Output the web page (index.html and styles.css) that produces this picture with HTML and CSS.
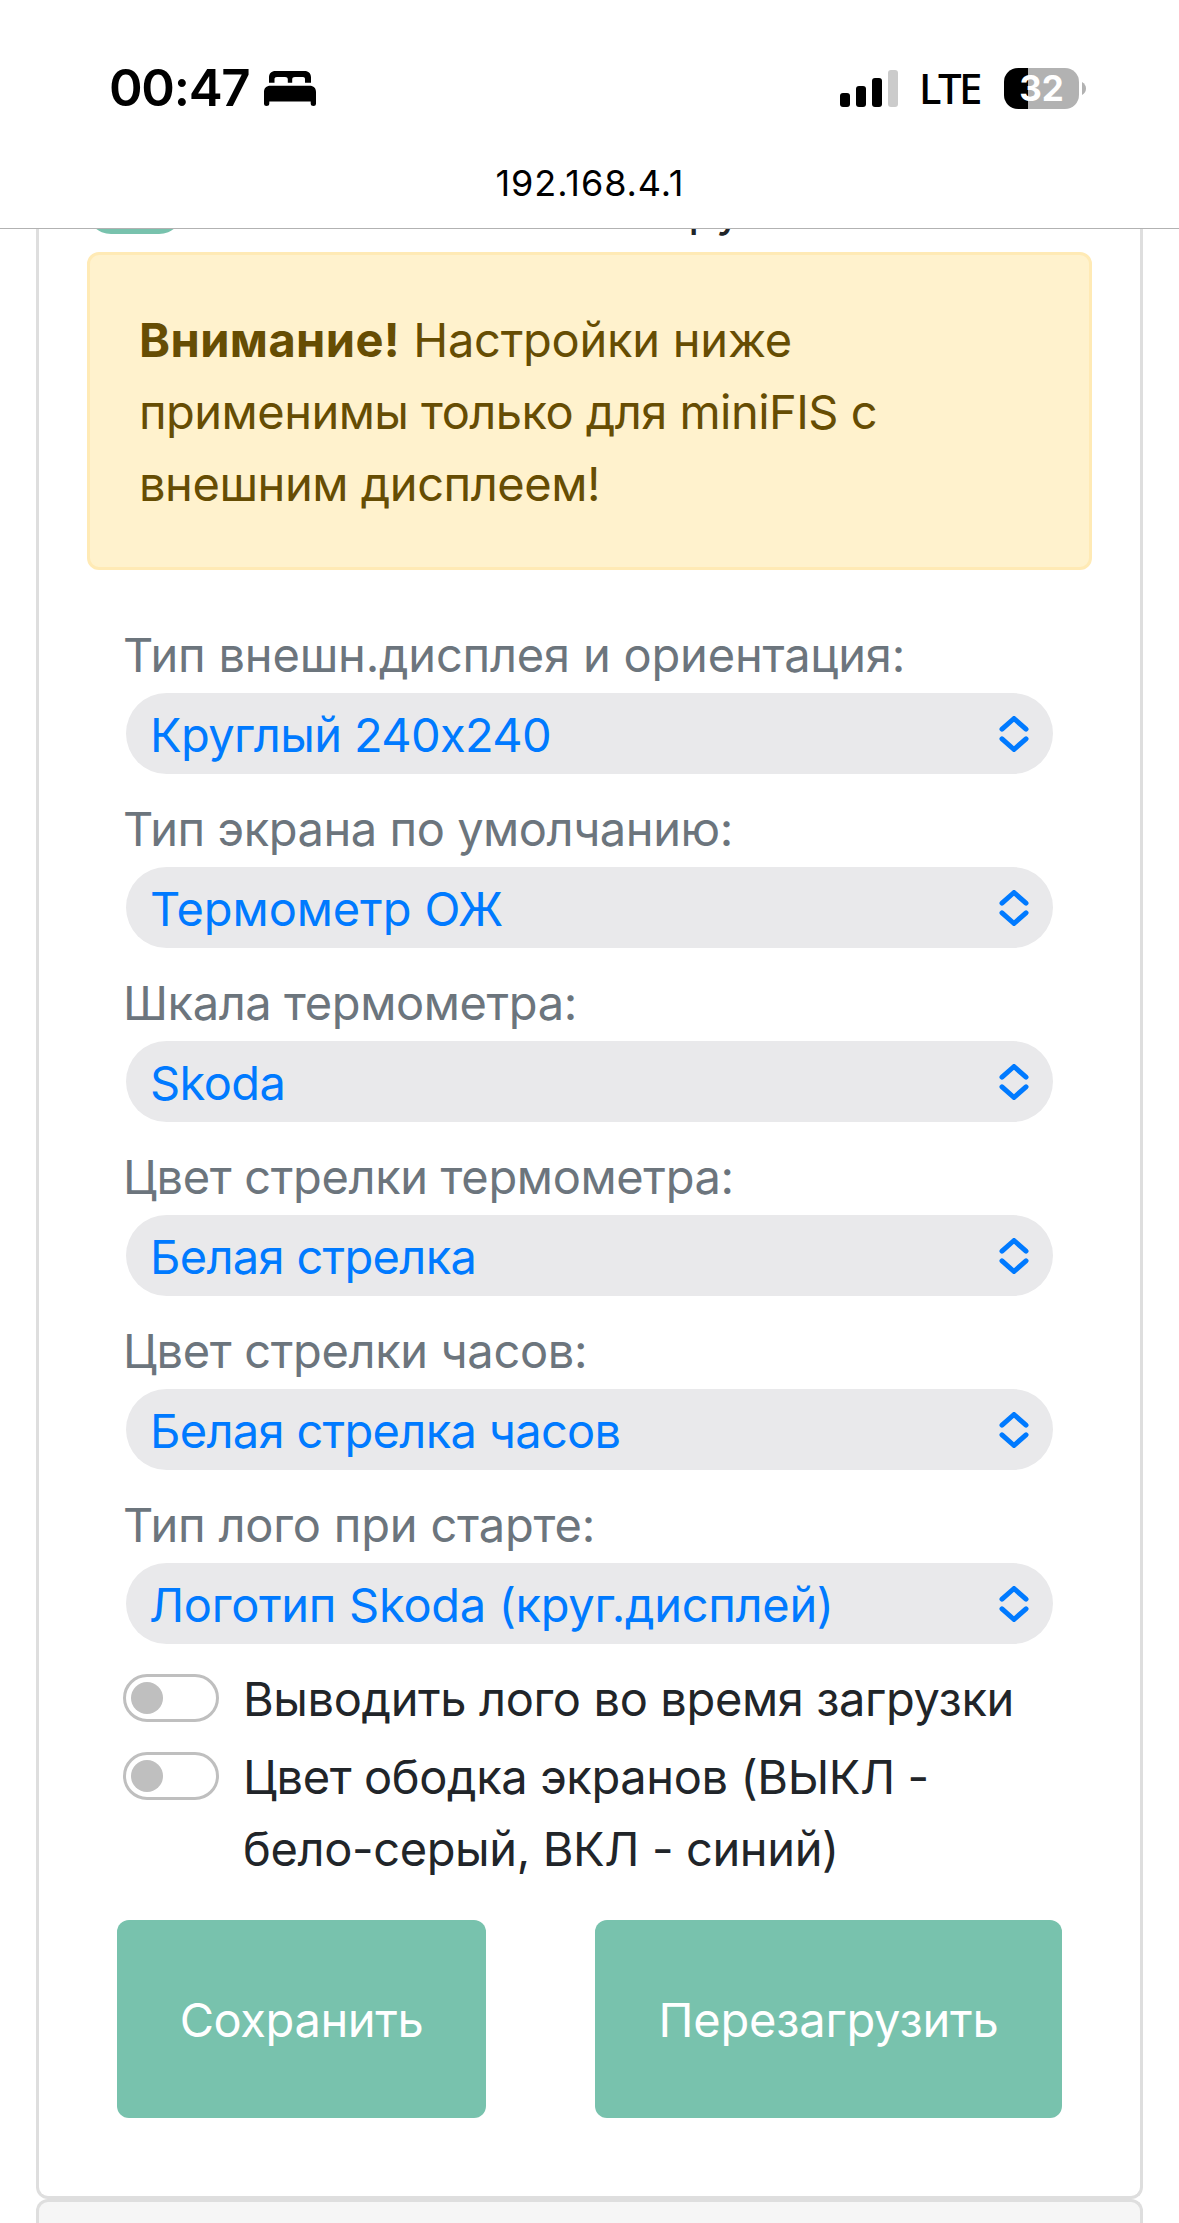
FILE: index.html
```
<!DOCTYPE html>
<html lang="ru">
<head>
<meta charset="utf-8">
<title>192.168.4.1</title>
<link rel="stylesheet" href="styles.css">
</head>
<body>
<svg class="defs" width="0" height="0">
  <symbol id="chevrons" viewBox="0 0 32 36"><path d="M4 13.2 16 2.500 28 13.200M4 22.800 16 33.500 28 22.800"/></symbol>
</svg>
<header class="browser">
  <div class="status">
    <div class="status-left">
      <span class="time">00:47</span>
      <svg class="bed" width="52" height="35" viewBox="0 0 52 35">
        <path d="M5 11.7V6.5C5 2.3 7.500 0 11.500 0H40.500C44.500 0 47 2.300 47 6.500V11.700H41V8C41 6.700 40.200 6 39 6H31C29.200 6 28.300 6.800 28.200 8.200V11.700H23.800V8.200C23.700 6.800 22.800 6 21 6H13C11.300 6 10.500 6.700 10.500 8V11.700Z"/>
        <path d="M0 21C0 17 2.300 14.700 6.500 14.700H45.500C49.700 14.700 52 17 52 21V32.500C52 34.200 51 35 49.500 35C47.800 35 46.700 34.200 46.700 32.500V30.500H5.300V32.500C5.300 34.200 4.200 35 2.500 35C1 35 0 34.200 0 32.500Z"/>
      </svg>
    </div>
    <div class="status-right">
      <svg class="signal" width="58" height="37" viewBox="0 0 58 37">
        <rect x="0" y="23" width="10" height="14" rx="3"/>
        <rect x="16" y="16" width="10" height="21" rx="3"/>
        <rect x="32" y="8" width="10" height="29" rx="3"/>
        <rect class="off" x="48" y="0" width="10" height="37" rx="3"/>
      </svg>
      <span class="lte">LTE</span>
      <div class="battery">32</div>
      <svg class="cap" width="4" height="13" viewBox="0 0 4 13"><path d="M0 0Q4 2.500 4 6.500T0 13Z"/></svg>
    </div>
  </div>
  <div class="address">192.168.4.1</div>
</header>
<main class="page">
  <section class="card">
    <div class="scrolled">
      <span class="switch-on"></span>
      <span class="scrolled-text">ру</span>
    </div>
    <div class="alert">
      <div><b class="warn">Внимание!</b> <span class="l1">Настройки ниже</span></div>
      <div class="l2">применимы только для miniFIS с</div>
      <div class="l3">внешним дисплеем!</div>
    </div>
    <div class="fields">
      <div class="field"><div class="label k1">Тип внешн.дисплея и ориентация:</div>
        <div class="select"><span class="v1">Круглый 240x240</span><svg class="arrows"><use href="#chevrons"/></svg></div></div>
      <div class="field"><div class="label k2">Тип экрана по умолчанию:</div>
        <div class="select"><span class="v2">Термометр ОЖ</span><svg class="arrows"><use href="#chevrons"/></svg></div></div>
      <div class="field"><div class="label k3">Шкала термометра:</div>
        <div class="select"><span class="v3">Skoda</span><svg class="arrows"><use href="#chevrons"/></svg></div></div>
      <div class="field"><div class="label k4">Цвет стрелки термометра:</div>
        <div class="select"><span class="v4">Белая стрелка</span><svg class="arrows"><use href="#chevrons"/></svg></div></div>
      <div class="field"><div class="label k5">Цвет стрелки часов:</div>
        <div class="select"><span class="v5">Белая стрелка часов</span><svg class="arrows"><use href="#chevrons"/></svg></div></div>
      <div class="field"><div class="label k1">Тип лого при старте:</div>
        <div class="select"><span class="v6">Логотип Skoda (круг.дисплей)</span><svg class="arrows"><use href="#chevrons"/></svg></div></div>
    </div>
    <div class="checks">
      <div class="check"><span class="switch"></span><div>Выводить лого во время загрузки</div></div>
      <div class="check"><span class="switch"></span><div>Цвет ободка экранов (ВЫКЛ -<br>бело-серый, ВКЛ - синий)</div></div>
    </div>
    <div class="buttons">
      <div class="btn save">Сохранить</div>
      <div class="btn reboot">Перезагрузить</div>
    </div>
  </section>
  <section class="card next"></section>
</main>
</body>
</html>
```
FILE: styles.css
```
* { box-sizing: border-box; }
body {
  margin: 0;
  height: 2223px;
  overflow: hidden;
  background: #fff;
  color: #212529;
  font: 400 47px/72px Inter, "Noto Sans", sans-serif;
  white-space: nowrap;
  display: flex;
  flex-direction: column;
}
.defs { display: none; }

/* Status bar and address */
.browser {
  flex: none;
  height: 229px;
  border-bottom: 1px solid #b2b2b2;
  color: #000;
}
.status {
  display: flex;
  justify-content: space-between;
  padding: 52px 93px 0 109px;
}
.status-left, .status-right { display: flex; align-items: center; height: 72px; }
.time { font-size: 51px; font-weight: 600; letter-spacing: -1.3px; }
.bed { margin-left: 15px; margin-top: 1px; }
.signal { margin-right: 21px; }
.signal .off { fill: #cbcbcb; }
.lte { font: 500 42px/72px "Noto Sans", sans-serif; width: 60px; letter-spacing: -2.6px; margin-right: 25px; padding-bottom: 1px; }
.battery {
  width: 75px;
  height: 41px;
  border-radius: 14px;
  background: linear-gradient(90deg, #000 24px, #b2b2b2 24px);
  color: #fff;
  font-weight: 700;
  font-size: 35px;
  line-height: 41px;
  text-align: center;
}
.cap { margin-left: 3px; fill: #b2b2b2; }
.address { font-size: 36px; letter-spacing: .9px; line-height: 44px; text-align: center; margin: 37px 0 0 1px; }

/* Cards */
.page { flex: 1; padding: 0 36px; display: flex; flex-direction: column; }
.card { border: 3px solid #dedede; border-radius: 12px; }
.card:first-child {
  flex: none;
  height: 1970px;
  padding: 0 48px;
  border-top: 0;
  border-radius: 0 0 12px 12px;
}
.card.next { flex: 1; background: #f6f6f6; border-bottom: 0; border-radius: 12px 12px 0 0; }

/* Row partly hidden beneath the address bar */
.scrolled { height: 23px; overflow: hidden; display: flex; align-items: flex-end; }
.switch-on { width: 96px; height: 48px; flex: none; border-radius: 24px; background: #78c2ad; margin-bottom: 18px; }
.scrolled-text { margin: 0 0 7px 505px; }

.alert {
  height: 318px;
  padding: 49px 48px 0 49px;
  border: 3px solid #ffeab5;
  border-radius: 12px;
  background: #fff2cd;
  color: #664d03;
}
.warn { font-weight: 700; letter-spacing: .4px; }
.l1 { letter-spacing: -.25px; }
.l2 { letter-spacing: -.53px; }
.l3 { letter-spacing: -.45px; }

/* Select fields */
.fields { padding: 49px 39px 0; }
.field { margin-bottom: 19px; }
.label { color: #6c757d; margin: 0 0 2px -3px; }
.select {
  height: 81px;
  border-radius: 41px;
  background: #e9e9eb;
  color: #007aff;
  display: flex;
  align-items: center;
  justify-content: space-between;
  padding: 0 23.5px 0 24px;
}
.select span { padding-top: 3px; }
.arrows { width: 32px; height: 36px; fill: none; stroke: #007aff; stroke-width: 5; stroke-linecap: round; stroke-linejoin: round; }
.k1 { letter-spacing: -.2px; }
.k2 { letter-spacing: -.45px; }
.k3 { letter-spacing: -.4px; }
.k4 { letter-spacing: -.35px; }
.k5 { letter-spacing: -.35px; }
.v1 { letter-spacing: -.63px; }
.v2 { letter-spacing: -.1px; }
.v3 { letter-spacing: -.6px; }
.v4, .v5 { letter-spacing: -.68px; }
.v6 { letter-spacing: -.3px; margin-left: -1px; }

/* Toggle rows */
.checks { padding: 0 36px; display: flex; flex-direction: column; gap: 6px; letter-spacing: -.38px; }
.check { display: flex; gap: 24px; }
.switch {
  width: 96px;
  height: 48px;
  margin-top: 11px;
  padding: 5px;
  border: 3px solid #bfbfbf;
  border-radius: 24px;
}
.switch::before { content: ""; display: block; width: 32px; height: 32px; border-radius: 50%; background: #bfbfbf; }

/* Actions */
.buttons { display: flex; justify-content: space-between; padding: 35px 30px 0; }
.btn {
  height: 198px;
  padding-top: 2px;
  border-radius: 12px;
  background: #78c2ad;
  color: #fff;
  font-weight: 400;
  line-height: 196px;
  text-align: center;
}
.save { width: 369px; letter-spacing: -.4px; }
.reboot { width: 467px; letter-spacing: -.2px; }
```
